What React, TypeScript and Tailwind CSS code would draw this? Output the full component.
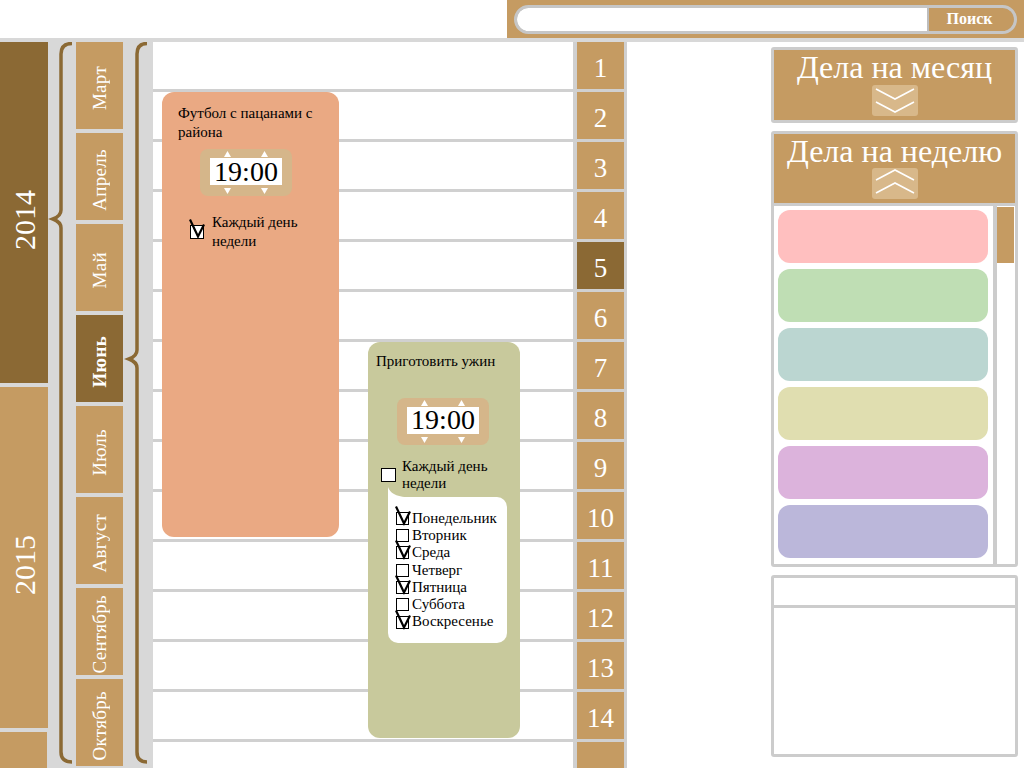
import React from "react";

const months = ["Март", "Апрель", "Май", "Июнь", "Июль", "Август", "Сентябрь", "Октябрь"];
const days = Array.from({ length: 15 }, (_, i) => i + 1);
const weekDays: [string, boolean][] = [
  ["Понедельник", true],
  ["Вторник", false],
  ["Среда", true],
  ["Четверг", false],
  ["Пятница", true],
  ["Суббота", false],
  ["Воскресенье", true],
];
const todoColors = ["bg-[#ffbfbf]", "bg-[#bfdeb4]", "bg-[#bbd6d1]", "bg-[#e0deb0]", "bg-[#dcb3dc]", "bg-[#bbb7da]"];

function Brace({ point, stem, end }: { point: number; stem: number; end: number }) {
  const d = `M${end} 1.5 Q${stem} 1.5 ${stem} 12 L${stem} ${point - 9} Q${stem} ${point - 3} ${stem - 8} ${point} Q${stem} ${point + 3} ${stem} ${point + 9} L${stem} 710 Q${stem} 720 ${end} 720`;
  return (
    <svg width="30" height="726" className="block">
      <path d={d} stroke="#8b6934" strokeWidth="3.5" fill="none" />
    </svg>
  );
}

function CheckBox({ checked, size = "w-[13px] h-[13px]" }: { checked?: boolean; size?: string }) {
  return (
    <span className={`relative block ${size} border-[1.5px] border-black bg-white shrink-0`}>
      {checked && (
        <svg className="absolute left-[-3px] top-[-7px] overflow-visible" width="18" height="20" viewBox="0 0 18 20">
          <path d="M2 0.5 L10 17.5 L16 5.5" stroke="black" strokeWidth="2.2" fill="none" />
        </svg>
      )}
    </span>
  );
}

function Tri({ down, left }: { down?: boolean; left: string }) {
  return (
    <svg
      className={`absolute ${left} ${down ? "bottom-[2px]" : "top-[2px]"}`}
      width="7"
      height="6"
      viewBox="0 0 7 6"
    >
      <path d={down ? "M0 0 L7 0 L3.5 6 Z" : "M0 6 L7 6 L3.5 0 Z"} fill="white" />
    </svg>
  );
}

function TimeBox() {
  return (
    <div className="relative w-[92px] h-[47px] rounded-[8px] bg-[#d5b68a] pt-[9px] pl-[10px]">
      <div className="w-[72px] h-[27px] bg-white flex items-center justify-center text-[28px] leading-none text-black">
        19:00
      </div>
      <Tri left="left-[24px]" />
      <Tri left="left-[61px]" />
      <Tri down left="left-[24px]" />
      <Tri down left="left-[61px]" />
    </div>
  );
}

function Chevrons({ up }: { up?: boolean }) {
  return (
    <div className="w-[46px] h-[31px] rounded-[3px] bg-[#d8b88a]">
      <svg width="46" height="31" viewBox="0 0 46 31">
        {up ? (
          <path d="M4 12 L23 2 L42 12 M4 25 L23 15 L42 25" stroke="white" strokeWidth="1.6" fill="none" />
        ) : (
          <path d="M4 4 L23 14 L42 4 M4 17 L23 27 L42 17" stroke="white" strokeWidth="1.6" fill="none" />
        )}
      </svg>
    </div>
  );
}

function App() {
  return (
    <div className="w-[1024px] h-[768px] overflow-hidden bg-white font-['Liberation_Serif',serif] flex flex-col">
      {/* top bar with search */}
      <div className="h-[38px] flex shrink-0">
        <div className="flex-1" />
        <div className="w-[517px] bg-[#c59b62] flex items-center px-[7px]">
          <div className="flex-1 h-[29px] rounded-full border-[3px] border-[#c6c6c6] bg-[#bdbdbd] flex overflow-hidden">
            <div className="w-[410px] bg-white rounded-l-full" />
            <div className="flex-1 ml-[2px] bg-[#c49a61] rounded-r-full flex items-center justify-center pr-[4px] text-white font-bold text-[16px]">
              Поиск
            </div>
          </div>
        </div>
      </div>

      <div className="flex flex-1 min-h-0 border-t-4 border-[#d8d8d8]">
        {/* years */}
        <div className="w-[48px] flex flex-col gap-[4px] bg-[#d8d8d8] shrink-0">
          <div className="h-[341px] shrink-0 bg-[#8b6934] flex items-center justify-center pt-[14px] text-white text-[30px]">
            <span className="[writing-mode:vertical-rl] rotate-180">2014</span>
          </div>
          <div className="h-[341px] shrink-0 bg-[#c59b62] flex items-center justify-center pt-[14px] text-white text-[30px]">
            <span className="[writing-mode:vertical-rl] rotate-180">2015</span>
          </div>
          <div className="flex-1 bg-[#c59b62] mr-[1px]" />
        </div>

        <div className="w-[28px] bg-[#d8d8d8] shrink-0 overflow-hidden">
          <Brace point={177} stem={13} end={24} />
        </div>

        {/* months */}
        <div className="w-[47px] flex flex-col gap-[4px] bg-[#d8d8d8] shrink-0">
          {months.map((m) => (
            <div
              key={m}
              className={`h-[87px] shrink-0 flex items-center justify-center pt-[6px] text-white text-[19px] tracking-[0.3px] ${
                m === "Июнь" ? "bg-[#8b6934] font-bold" : "bg-[#c59b62]"
              }`}
            >
              <span className="[writing-mode:vertical-rl] rotate-180 leading-none">{m}</span>
            </div>
          ))}
        </div>

        <div className="w-[30px] bg-[#d8d8d8] shrink-0 overflow-hidden">
          <Brace point={317} stem={14} end={24} />
        </div>

        {/* main day grid */}
        <div className="w-[420px] shrink-0 relative">
          {days.map((d) => (
            <div key={d} className="h-[50px] border-b-[3px] border-[#d0d0d0]" />
          ))}

          <div className="absolute left-[9px] top-[50px] w-[177px] h-[445px] rounded-[12px] bg-[#eaa983] pt-[12px] text-[15px] leading-[18.7px] text-black">
            <div className="pl-[16px]">
              Футбол с пацанами с<br />
              района
            </div>
            <div className="mt-[8px] ml-[38px]">
              <TimeBox />
            </div>
            <div className="mt-[17px] ml-[28px] flex items-center gap-[8px] leading-[19px]">
              <CheckBox checked size="w-[14px] h-[14px]" />
              <span>
                Каждый день
                <br />
                недели
              </span>
            </div>
          </div>

          <div className="absolute left-[215px] top-[300px] w-[152px] h-[396px] rounded-[12px] bg-[#c8c99c] pt-[10px] text-[15px] leading-[18.7px] text-black">
            <div className="pl-[8px]">Приготовить ужин</div>
            <div className="mt-[27px] ml-[29px]">
              <TimeBox />
            </div>
            <div className="mt-[13px] ml-[13px] flex items-center gap-[6px] leading-[17px]">
              <CheckBox size="w-[15px] h-[14px]" />
              <span>
                Каждый день
                <br />
                недели
              </span>
            </div>
            <div className="relative mt-[5px] ml-[20px] w-[119px] h-[146px] bg-white rounded-[10px] rounded-tl-none pt-[13px] pl-[8px]">
              <svg className="absolute left-0 top-[-10px]" width="18" height="11" viewBox="0 0 18 11">
                <path d="M0 0 Q3 9 18 10.2 L18 11 L0 11 Z" fill="white" />
              </svg>
              {weekDays.map(([name, on]) => (
                <div key={name} className="flex items-center gap-[3px] h-[17.3px] leading-[17.3px]">
                  <CheckBox checked={on} />
                  <span>{name}</span>
                </div>
              ))}
            </div>
          </div>
        </div>

        {/* day numbers */}
        <div className="w-[54px] shrink-0 bg-[#d0d0d0] pl-[4px] pr-[3px]">
          {days.map((d) => (
            <div key={d} className="h-[50px] pb-[3px]">
              <div
                className={`h-full flex items-center justify-center pt-[6px] text-white text-[27px] leading-none ${
                  d === 5 ? "bg-[#8b6934]" : "bg-[#c59b62]"
                }`}
              >
                {d < 15 ? d : ""}
              </div>
            </div>
          ))}
        </div>

        <div className="w-[144px] shrink-0" />

        {/* right panel */}
        <div className="w-[247px] shrink-0 flex flex-col gap-[8px] pt-[5px]">
          <div className="h-[76px] border-[3px] border-[#cccccc] rounded-[3px] bg-[#c59b62] flex flex-col items-center">
            <div className="text-white text-[32px] leading-[34px] whitespace-nowrap">Дела на месяц</div>
            <div className="mt-[1px]">
              <Chevrons />
            </div>
          </div>

          <div className="h-[436px] border-[3px] border-[#cccccc] rounded-[3px] flex flex-col">
            <div className="h-[72px] bg-[#c59b62] border-b-[3px] border-[#cccccc] flex flex-col items-center">
              <div className="text-white text-[32px] leading-[34px] whitespace-nowrap">Дела на неделю</div>
              <Chevrons up />
            </div>
            <div className="flex flex-1 min-h-0">
              <div className="flex-1 flex flex-col gap-[6px] pt-[4px] pl-[4px] pr-[5px]">
                {todoColors.map((c) => (
                  <div key={c} className={`h-[53px] rounded-[12px] ${c}`} />
                ))}
              </div>
              <div className="w-[22px] border-l-4 border-[#cccccc] pt-[1px]">
                <div className="w-[17px] h-[56px] bg-[#c59b62]" />
              </div>
            </div>
          </div>

          <div className="h-[182px] border-[3px] border-[#cccccc] rounded-[3px]">
            <div className="h-[30px] border-b-[3px] border-[#cccccc]" />
          </div>
        </div>
      </div>
    </div>
  );
}

export default App;
